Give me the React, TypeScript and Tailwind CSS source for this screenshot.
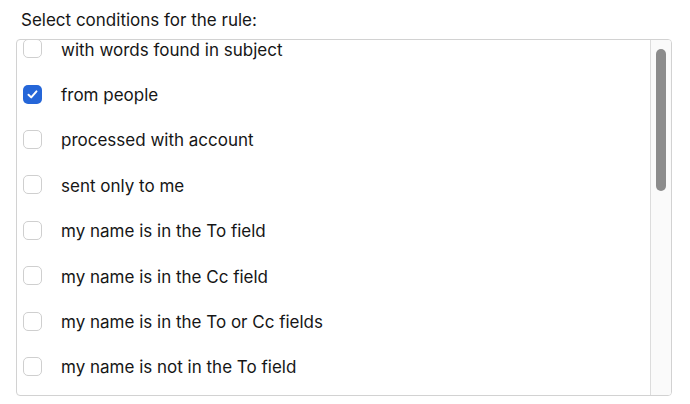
import React from 'react';

const conditions = [
  { label: 'with words found in subject', checked: false },
  { label: 'from people', checked: true },
  { label: 'processed with account', checked: false },
  { label: 'sent only to me', checked: false },
  { label: 'my name is in the To field', checked: false },
  { label: 'my name is in the Cc field', checked: false },
  { label: 'my name is in the To or Cc fields', checked: false },
  { label: 'my name is not in the To field', checked: false },
];

const Checkbox: React.FC<{ checked: boolean }> = ({ checked }) =>
  checked ? (
    <span className="flex h-[19px] w-[19px] shrink-0 items-center justify-center rounded-[5px] bg-[#2566d8]">
      <svg width="13" height="13" viewBox="0 0 13 13" fill="none">
        <path d="M2.5 6.8 L5.2 9.4 L10.5 3.4" stroke="white" strokeWidth="2" strokeLinecap="round" strokeLinejoin="round" />
      </svg>
    </span>
  ) : (
    <span className="h-[19px] w-[19px] shrink-0 rounded-[5px] border border-[#cfcfcf] bg-white" />
  );

const App: React.FC = () => {
  return (
    <div className="h-[404px] w-[690px] bg-white font-['Inter','Liberation_Sans',Arial,sans-serif] text-[#161616]">
      <div className="pl-[21px] pt-[8px] text-[17px] leading-[24px]">Select conditions for the rule:</div>
      <div className="ml-[16px] mt-[7px] flex h-[357px] w-[656px] overflow-hidden rounded-[4px] border border-[#d2d2d2]">
        <div className="flex-1 overflow-hidden">
          <ul className="-mt-[14px]">
            {conditions.map((c) => (
              <li key={c.label} className="flex h-[45.4px] items-center pl-[6px]">
                <Checkbox checked={c.checked} />
                <span className="ml-[19px] pt-[2px] text-[17px] leading-[16px]">{c.label}</span>
              </li>
            ))}
          </ul>
        </div>
        <div className="w-[21px] shrink-0 border-l border-[#dcdcdc] bg-[#fafafa] pt-[9px]">
          <div className="ml-[5px] h-[142px] w-[10px] rounded-full bg-[#8c8c8c]" />
        </div>
      </div>
    </div>
  );
};

export default App;
